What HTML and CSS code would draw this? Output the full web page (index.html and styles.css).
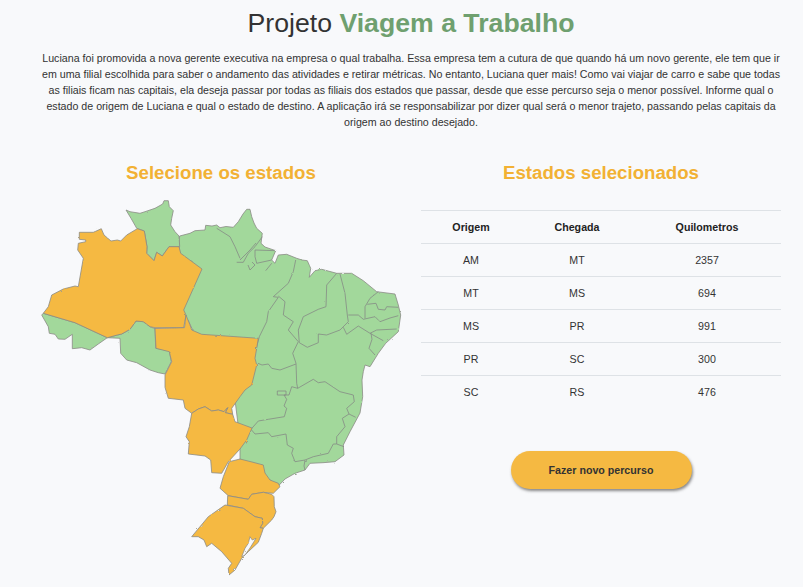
FILE: index.html
```html
<!DOCTYPE html>
<html lang="pt-BR">
<head>
<meta charset="utf-8">
<title>Projeto Viagem a Trabalho</title>
<link rel="stylesheet" href="styles.css">
</head>
<body>
<main class="page">
  <header class="intro">
    <h1 class="title">Projeto <strong class="title-accent">Viagem a Trabalho</strong></h1>
    <p class="lead">Luciana foi promovida a nova gerente executiva na empresa o qual trabalha. Essa empresa tem a cutura de que quando há um novo gerente, ele tem que ir em uma filial escolhida para saber o andamento das atividades e retirar métricas. No entanto, Luciana quer mais! Como vai viajar de carro e sabe que todas as filiais ficam nas capitais, ela deseja passar por todas as filiais dos estados que passar, desde que esse percurso seja o menor possível. Informe qual o estado de origem de Luciana e qual o estado de destino. A aplicação irá se responsabilizar por dizer qual será o menor trajeto, passando pelas capitais da origem ao destino desejado.</p>
  </header>
  <div class="columns">
    <section class="col">
      <h2 class="col-title">Selecione os estados</h2>
      <svg class="map" viewBox="41 195 362 385" role="img" aria-label="Mapa do Brasil">
        <defs>
          <filter id="rough" x="-5%" y="-5%" width="110%" height="110%">
            <feTurbulence type="fractalNoise" baseFrequency="0.22" numOctaves="2" seed="4"/>
            <feDisplacementMap in="SourceGraphic" scale="1.8"/>
          </filter>
        </defs>
        <g class="shapes">
        <g class="st green">
          <path d="M179.7 236 190 233.3 195 230.7 205 230 205.7 225.3 212 226 216.7 225 220 227.7 226 226.5 233.3 227.3 238.3 221.7 243 214 246.7 209.3 250 209.3 251.7 216.7 254 223 256.7 228.3 262.3 233.3 261 243.3 265 247 275.7 250.7 271.7 260 275 263.3 278.3 255 286.7 254.3 296.7 258.3 302 260 307.3 260.7 310.7 268.3 309.3 277.3 315 270.7 321.7 269.3 336.7 273.3 351.7 273.3 363.3 280.7 376.7 291.7 395 294 398.3 305 400.7 315 398.3 331.7 385.7 343.3 378.3 353.3 370 366.7 365 365 363.3 371.7 362 380 362.7 396.7 360 413 350 431.7 343.3 445 344 455 335 461.7 323 462.7 310 463.3 305 470 295 473.3 285 479 278.3 486 270 480 240 462 240 440 235 400 240 350 195 335 188 320 180 315 180 260 179 240Z"/>
          <path d="M126 210 130 211.7 140 213.3 145 211.7 155 208.3 162.7 204 164 200.7 168.3 200.7 169.3 206.7 173.3 210.7 171.7 218.3 170.7 225 175 231.7 179 236 179.7 246.7 169 246.7 162.3 256 156.7 252.3 154 260.7 146.7 253.3 147 246.7 144.3 231 136.7 228.3 131 218.3Z"/>
          <path d="M41.7 315 43.3 313.3 75 322.7 107.3 337.7 98.3 344 90 350 81.7 347.7 72.3 348.7 72.3 334.3 65 339.3 58.3 339 55 334.3 49.3 333.3 48.3 326.7Z"/>
          <path d="M107.3 337.7 117.3 335 121.7 334 130 329.3 136 321 143.3 321.7 150 326.7 155 328.7 155.7 348.3 169.3 350.7 171.3 361.7 165 374 158.3 372.7 150 370 136.7 362.7 126.7 360 120.7 353.3 120 338.3Z"/>
        </g>
        <path class="lines" d="M216.7 228.3 230 236.7 235 246.7 240 258.3M236.7 262.3 243.3 262.3 248.3 253.3 255 246.7 262.3 236.7M240 260 250 250 256 243M255 250 275.7 250.7M255 250 255 256.7 256.7 263.3 271.7 260M248 265 250 270 255 265 252 262M265.7 270.7 271.7 263.3M295.7 260 293.3 271.7 288.3 283.3 273.3 296.7 278.3 297.3 268.3 311.7 266.7 321.7 259.3 336.7 255 353.3M278.3 296 285 301.7 283.3 315 293.3 321.7 288.3 330 298.3 341.7 292.7 353.3 296 363.3 296.7 383.3 297.7 388.3M258 363.3 262 365 268.3 364 271.7 368.3 280 370 296 364M336.7 273.3 326.7 285 326 306.7 318.3 309.3 303.3 316.7 298.3 330 299.3 342.7 307.3 347.3 318.3 342.7 318.3 334 326.7 335 340 330 348.3 321.7 347.3 315 345 293.3 340 274M348.3 315 358.3 315 363.3 319.3 375 316.7 380 321.7 390 318 398.3 315.7M378.3 291.7 370 298.3 365 306.7 365 318.3M367.3 304.3 376 303.3 378.3 309.3 385 310 386.7 306.7 398.3 307.3M343.3 327.3 346.7 334.3 358.3 326 370 333.3 376.7 330 396.7 329M370 333.3 383.3 340.7M371 333.3 372 339.3 369 348.3 375 355M297.7 388.3 313.3 379.3 318.3 382.7 325 381.7 340 391.7 353.3 395 354.3 401.7 346.7 408.3 349 414 355.7 417.3M349 414 342.3 418.3 345 426.7 336.7 436.7 336.7 444 344 446.7M336.7 444 333.3 444 328.3 453.3 313.3 456.7 305 460 295 461.7 291.7 453.3 293.3 448.3 287.3 445 286 434 271.7 436.7 268.3 432.7 255 434 251 429.3M305 460 304 466 305 470M251 429.3 258.3 421 268.3 419.3 284.3 416.7 286.7 408.3 284 406 286.7 399.3 284 395 289 395 291.7 386.7 297.7 388.3M277.3 391H286V395H277.3Z"/>
        <g class="st orange">
          <path d="M79.3 232.3 93.3 232.3 95.7 231.3 101.3 228.7 104 235 111 241 117.3 240 120.7 241 126.7 235 137.3 228.7 144.3 231 147 246.7 146.7 253.3 154 260.7 156.7 252.3 162.3 256 169 246.7 179 246.7 180.7 253.3 202 269 183.7 310 186 315 183.7 327.7 155 327.7 150 326.7 143.3 321.7 136 321 130 329.3 121.7 334 117.3 335 107.3 337.7 75 322.7 43.3 313.3 48.3 306.7 51.7 295 63.3 289 75 286 78.3 286.7 83.3 258.3 77.7 250 78.3 243.3 85.7 241.7 85.7 240 79.3 239.3Z"/>
          <path d="M155 328.5 184.5 327.7 186 315 190 325 191.7 330 201.7 334.3 258.3 338.3 255 358.3 256.7 365 251.7 385 245 390 240 396.7 231.7 408.3 232.7 414.3 225.3 412.7 227.7 407.7 224 411.7 218.3 410 211.7 411 205 406.7 198.3 409 191.7 413.3 185 408.3 183.3 400 168.3 398.3 165 387.3 165 375 171.7 361.7 169.3 351.7 156 348.3Z"/>
          <path d="M191.7 413.3 198.3 409 205 406.7 211.7 411 218.3 410 224 411.7 227.7 407.7 225.3 412.7 232.7 414.3 235 421.7 252 428 246.7 440 240 449 228.3 461.7 221.7 473.3 211.7 472.7 210.7 460 205 456 188.3 454 189.3 441.7 186 436.7 189.3 426.7Z"/>
          <path d="M229.3 461.7 240 459 252 462 263.3 465 265 473 270 480 278.3 483.3 280 486.7 273.3 493.3 263.3 492.3 251.7 494.3 248.3 499.3 228.3 495.7 220 488.3 223.3 476.7Z"/>
          <path d="M227.7 495.7 248.3 499.3 251.7 494.3 263.3 492.3 271.7 494.3 274 496.7 274.3 506.7 276 511.7 274 516.7 271.7 520 263.3 528.3 260 527.7 262.7 523.3 262.3 518.3 255 516.7 243.3 508.3 227.3 505Z"/>
          <path d="M225 505 243.3 508.3 255 516.7 262.3 518.3 262.7 523.3 260 527.7 263.3 528.3 261.7 533.3 258.3 542.3 248.3 551.7 241.7 558.3 235 570 229 575 228.3 568.3 231.7 563.3 221.7 551.7 211.7 543.3 206.7 546.7 204 540 198.3 536.7 191.7 536.7 208.3 516.7Z"/>
        </g>
        <path class="lagoon" d="M250 536.7 252.3 540 256 538.3 250 548 245 555 241.7 556.7 245 548.3 248.3 543.3Z"/>
        </g>
      </svg>
    </section>
    <section class="col">
      <h2 class="col-title">Estados selecionados</h2>
      <table class="routes">
        <thead>
          <tr><th class="c1">Origem</th><th class="c2">Chegada</th><th>Quilometros</th></tr>
        </thead>
        <tbody>
          <tr><td>AM</td><td>MT</td><td>2357</td></tr>
          <tr><td>MT</td><td>MS</td><td>694</td></tr>
          <tr><td>MS</td><td>PR</td><td>991</td></tr>
          <tr><td>PR</td><td>SC</td><td>300</td></tr>
          <tr><td>SC</td><td>RS</td><td>476</td></tr>
        </tbody>
      </table>
      <div class="actions"><button class="btn" type="button">Fazer novo percurso</button></div>
    </section>
  </div>
</main>
</body>
</html>
```
FILE: styles.css
```css
* { box-sizing: border-box; }
html, body { margin: 0; }
body {
  background: #f8f9fb;
  color: #333;
  font-family: "Liberation Sans", Arial, sans-serif;
  overflow: hidden;
}
.page { width: 740px; height: 587px; margin-left: 41px; }
.intro { text-align: center; }
.title {
  margin: 0;
  padding-top: 6px;
  font-size: 26.67px;
  font-weight: 400;
  line-height: 34px;
}
.title-accent { color: #6fa06f; font-weight: 700; }
.lead { margin: 10px 0 0; font-size: 10.67px; line-height: 16px; color: #333; }
.columns { display: grid; grid-template-columns: 360px 360px; column-gap: 20px; margin-top: 31px; }
.col-title {
  margin: 0;
  height: 24px;
  font-size: 18.67px;
  line-height: 24px;
  font-weight: 700;
  text-align: center;
  color: #f2b134;
}
.map { display: block; width: 362px; height: 385px; margin-top: 10px; overflow: visible; }
.shapes { filter: url(#rough); }
.st path { stroke: #8a8a85; stroke-width: .8; stroke-linejoin: round; }
.green path { fill: #a2d89b; }
.orange path { fill: #f5b942; }
.lines { fill: none; stroke: #858a85; stroke-width: .8; stroke-linejoin: round; }
.lagoon { fill: #f8f9fb; stroke: #8a8a85; stroke-width: .7; }
.routes { width: 360px; margin-top: 25px; border-collapse: collapse; table-layout: fixed; font-size: 10.67px; }
.routes th, .routes td { height: 33px; padding: 0; text-align: center; border-top: 1px solid #dee2e6; }
.routes th { font-weight: 700; color: #222; }
.routes td { color: #333; }
.c1 { width: 100px; }
.c2 { width: 112px; }
.actions { display: flex; justify-content: center; margin-top: 42px; }
.btn {
  width: 181px;
  height: 38px;
  border: 0;
  border-radius: 19px;
  background: #f5b942;
  color: #333;
  font-family: inherit;
  font-size: 10.67px;
  font-weight: 700;
  box-shadow: 1px 2px 3px rgba(60, 60, 60, .6);
}
```
